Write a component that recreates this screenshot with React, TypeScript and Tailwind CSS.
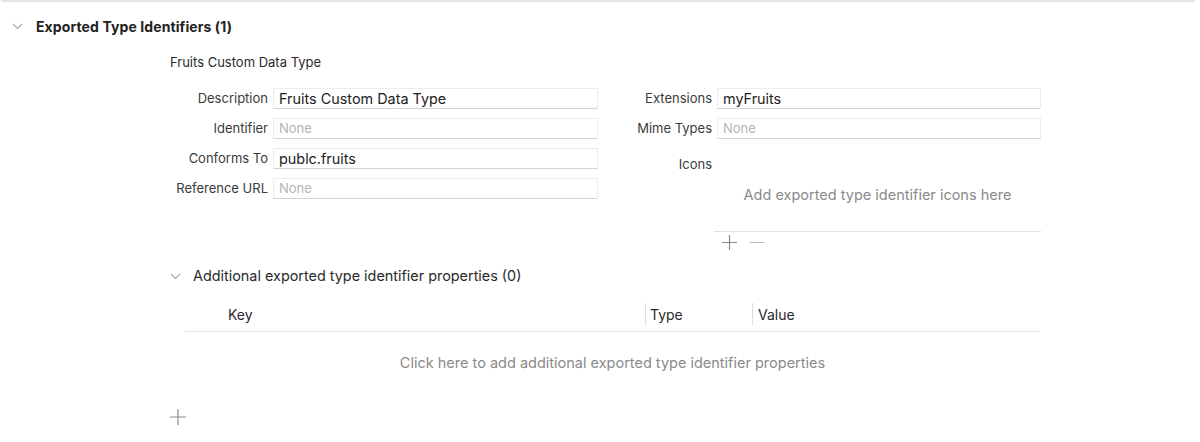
import React from 'react'

function Chevron() {
  return (
    <svg width="11" height="7" viewBox="0 0 11 7" className="shrink-0">
      <path d="M1 1l4.5 4.5L10 1" fill="none" stroke="#a8a8a8" strokeWidth="1.2" />
    </svg>
  )
}

function Plus({ size = 15 }: { size?: number }) {
  return (
    <svg width={size} height={size} viewBox={`0 0 ${size} ${size}`}>
      <path
        d={`M${size / 2} 0V${size}M0 ${size / 2}H${size}`}
        stroke="#8a8a8a"
        strokeWidth="1.2"
        fill="none"
      />
    </svg>
  )
}

function Field({ label, value, labelW }: { label: string; value?: string; labelW: string }) {
  return (
    <div className="flex items-center h-[21px]">
      <div className={`${labelW} shrink-0 text-right text-[13px] text-[#3b3b3b] pr-[5px]`}>{label}</div>
      <div className="flex-1 h-[21px] flex items-center px-[5px] bg-white border border-[#ececec] border-b-[#d4d4d4]">
        {value ? (
          <span className="text-[14.4px] text-[#222]">{value}</span>
        ) : (
          <span className="text-[13px] text-[#b5b5b5]">None</span>
        )}
      </div>
    </div>
  )
}

export default function App() {
  return (
    <div
      className="w-[1200px] h-[442px] bg-white overflow-hidden"
      style={{ fontFamily: 'Inter, "Noto Sans", sans-serif' }}
    >
      <div className="h-[2px] mx-[1px] bg-[#e6e6e6] w-[1194px]" />

      <div className="flex items-center h-[48px] pl-[12px] gap-[13px]">
        <Chevron />
        <h2 className="text-[14px] font-bold text-[#222] tracking-[0.1px]">Exported Type Identifiers (1)</h2>
      </div>

      <div className="pl-[170px]">
        <div className="text-[13px] text-[#2a2a2a] h-[24px] leading-[24px]">Fruits Custom Data Type</div>

        <div className="flex mt-[14px] items-start">
          <div className="w-[428px] flex flex-col gap-[9px]">
            <Field labelW="w-[103px]" label="Description" value="Fruits Custom Data Type" />
            <Field labelW="w-[103px]" label="Identifier" />
            <Field labelW="w-[103px]" label="Conforms To" value="publc.fruits" />
            <Field labelW="w-[103px]" label="Reference URL" />
          </div>

          <div className="ml-[22px] w-[421px] flex flex-col">
            <div className="flex flex-col gap-[9px]">
              <Field labelW="w-[97px]" label="Extensions" value="myFruits" />
              <Field labelW="w-[97px]" label="Mime Types" />
            </div>
            <div className="w-[97px] mt-[15px] text-right pr-[5px] text-[13px] text-[#3b3b3b] h-[21px] leading-[21px]">
              Icons
            </div>
            <div className="pl-[94px]">
              <div className="h-[40px] flex items-center justify-center text-[14.5px] text-[#8a8a8a]">
                Add exported type identifier icons here
              </div>
              <div className="h-[1px] bg-[#e2e2e2] mt-[16px]" />
              <div className="flex items-center gap-[13px] pl-[8px] mt-[3px] h-[15px]">
                <Plus />
                <div className="w-[14px] h-[1.2px] bg-[#b8b8b8]" />
              </div>
            </div>
          </div>
        </div>

        <div className="flex items-center gap-[12px] mt-[14px] h-[24px]">
          <Chevron />
          <span className="text-[14.4px] text-[#2a2a2a]">Additional exported type identifier properties (0)</span>
        </div>

        <div className="ml-[15px] w-[855px] mt-[14px]">
          <div className="flex items-center h-[24px] text-[14px] text-[#2a2a2a]">
            <div className="w-[460px] pl-[43px]">Key</div>
            <div className="w-[107px] flex items-center border-l border-[#dedede] h-[22px] pl-[4px]">
              Type
            </div>
            <div className="flex items-center border-l border-[#dedede] h-[22px] pl-[5px]">Value</div>
          </div>
          <div className="h-[1px] bg-[#e4e4e4] mt-[5px]" />
          <div className="h-[62px] flex items-center justify-center text-[14.5px] text-[#8a8a8a]">
            Click here to add additional exported type identifier properties
          </div>
        </div>

        <div className="mt-[15px]">
          <Plus size={16} />
        </div>
      </div>
    </div>
  )
}
